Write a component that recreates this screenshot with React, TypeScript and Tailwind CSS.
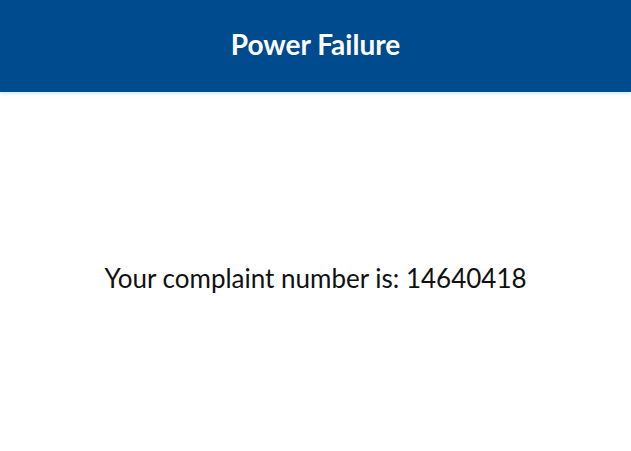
export default function App() {
  return (
    <div className="flex h-[451px] w-[631px] flex-col bg-white font-['Lato',sans-serif]">
      <header className="flex h-[92px] shrink-0 items-center justify-center bg-[#004b8d] pb-[4px] shadow-[0_2px_3px_rgba(120,200,230,0.35)]">
        <h1 className="text-[28px] font-bold text-white">Power Failure</h1>
      </header>
      <main className="flex flex-1 items-center justify-center pt-[14px]">
        <p className="text-[26px] text-[#111111]">Your complaint number is: 14640418</p>
      </main>
    </div>
  );
}
